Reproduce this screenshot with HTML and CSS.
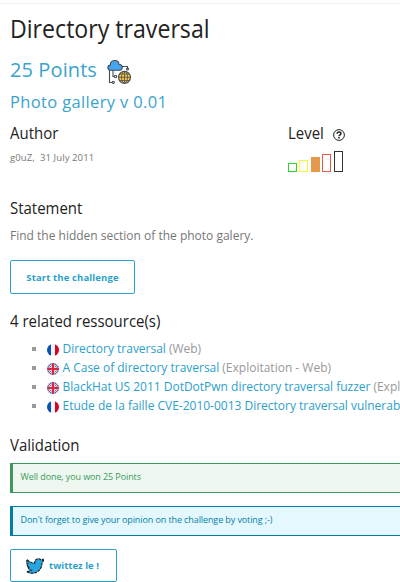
FILE: index.html
```html
<!DOCTYPE html>
<html lang="en">
<head>
<meta charset="utf-8">
<title>Directory traversal</title>
<link rel="stylesheet" href="styles.css">
</head>
<body>
<svg width="0" height="0" class="defs">
  <defs>
    <clipPath id="round"><circle cx="6" cy="6" r="6"/></clipPath>
    <g id="fr" clip-path="url(#round)"><path fill="#f4f4f4" d="M0 0h12v12H0z"/><path fill="#0752b5" d="M0 0h4v12H0z"/><path fill="#d80027" d="M8 0h4v12H8z"/></g>
    <g id="gb" clip-path="url(#round)"><path fill="#2f5cae" d="M0 0h12v12H0z"/><path stroke="#eee" stroke-width="2.2" d="M1 1l10 10M11 1L1 11"/><path stroke="#db2b48" stroke-width=".9" d="M1 1l10 10M11 1L1 11"/><path stroke="#eee" stroke-width="3.2" d="M6 0v12M0 6h12"/><path stroke="#db2545" stroke-width="2" d="M6 0v12M0 6h12"/></g>
  </defs>
</svg>
<main class="page">
  <h1><span>Directory traversal</span></h1>
  <div class="points"><span class="points-text">25 Points</span>
    <svg class="category" width="24" height="24" viewBox="0 0 24 24" fill="none" stroke="#434b57" stroke-width="1.1">
      <path d="M2.5 10v12.500h3M6 10v6.500h1M15 6.500h5.500v2"/>
      <circle cx="6.300" cy="22.300" r="1.100"/><circle cx="8.500" cy="16.500" r="1.200"/><circle cx="20.500" cy="9" r="1"/>
      <path fill="#45a5ee" d="M3.500 10.200C.2 10.200-.1 5.600 3.300 5.100C3.300-.7 11.500-1 12 4.200C16 4.300 16.200 10.200 13 10.200z"/>
      <circle cx="17.500" cy="17.300" r="6" fill="#f9c43f"/>
      <path stroke-width=".8" d="M17.500 11.300v12M11.500 17.300h12M12.700 14h9.600M12.700 20.600h9.600"/><ellipse stroke-width=".8" cx="17.500" cy="17.300" rx="3" ry="6"/>
    </svg>
  </div>
  <p class="subtitle">Photo gallery v 0.01</p>
  <div class="meta">
    <section class="author">
      <h2><span class="w-author">Author</span></h2>
      <p class="byline">g0uZ,&nbsp; 31 July 2011</p>
    </section>
    <section class="level">
      <div class="level-head"><h2><span class="w-level">Level</span></h2>
        <svg class="help" width="12" height="12" viewBox="0 0 12 12" fill="none" stroke="#222"><circle cx="6" cy="6" r="5.400"/><path stroke-width="1.500" d="M4.100 4.800C4.100 2.500 8 2.500 8 4.600C8 6 6 5.800 6 7.300M6 8.100v1.400"/></svg>
      </div>
      <div class="bars"><i class="b1"></i><i class="b2"></i><i class="b3"></i><i class="b4"></i><i class="b5"></i></div>
    </section>
  </div>
  <h2><span class="w-statement">Statement</span></h2>
  <p class="statement">Find the hidden section of the photo galery.</p>
  <a class="button start">Start the challenge</a>
  <h2 class="related"><span class="w-related">4 related ressource(s)</span></h2>
  <ul class="resources">
    <li><svg width="12" height="12"><use href="#fr"/></svg><a>Directory traversal</a><span>(Web)</span></li>
    <li><svg width="12" height="12"><use href="#gb"/></svg><a>A Case of directory traversal</a><span>(Exploitation - Web)</span></li>
    <li><svg width="12" height="12"><use href="#gb"/></svg><a>BlackHat US 2011 DotDotPwn directory traversal fuzzer</a><span>(Expl</span></li>
    <li><svg width="12" height="12"><use href="#fr"/></svg><a>Etude de la faille CVE-2010-0013 Directory traversal vulnerab</a></li>
  </ul>
  <h2 class="validation"><span class="w-validation">Validation</span></h2>
  <div class="alert success">Well done, you won 25 Points</div>
  <div class="alert info">Don't forget to give your opinion on the challenge by voting ;-)</div>
  <a class="button tweet">
    <svg width="18" height="16" viewBox="0 0 18 16"><path fill="#29a5df" stroke="#101c24" stroke-width="1.100" stroke-dasharray="3 .7" d="M1.200 1.700C3.200 4 5.500 5.100 8.700 5.200C8.500 2.600 10 .8 12.300.8C13.500.8 14.300 1.200 15 1.900L17.300 1.200L16.200 2.800L17.600 2.700L16 4.600C16.200 10.500 12 15.200 6 15.200C4 15.200 2 14.700.6 13.600C2.600 13.700 4 13.200 5.300 12.200C3.600 12 2.600 11 2.200 9.700H3.600C1.800 9 .9 7.600.9 5.800L2.300 6.200C.7 4.900.4 3.300 1.200 1.700z"/></svg>
    <span>twittez le !</span>
  </a>
</main>
</body>
</html>
```
FILE: styles.css
```css
* { box-sizing: border-box; }
body {
  margin: 0;
  height: 582px;
  overflow: hidden;
  background: #fff;
  font-family: "Open Sans", "Noto Sans", sans-serif;
  color: #777;
}
.defs { position: absolute; }
.page { margin-top: 3px; border-top: 1px solid #eee; padding: 9px 0 0 10px; }
h1, h2, p, ul { margin: 0; padding: 0; font-weight: 400; }
h1, h2 { color: #222; white-space: nowrap; }
h1 span, h2 span { display: inline-block; transform-origin: 0 50%; }
h1 { height: 30px; font-size: 25px; line-height: 30px; }
h1 span { transform: scaleX(.925); }
h2 { height: 24px; font-size: 16px; line-height: 24px; }
h2 span { transform: scaleX(.935); }
.points { display: flex; height: 44px; padding-top: 12px; color: #3ba3cd; font-size: 20px; line-height: 30px; }
.points-text { letter-spacing: .1px; }
.category { margin: 5px 0 0 10px; overflow: visible; }
.subtitle { height: 34px; color: #3ba3cd; font-size: 16.500px; line-height: 30px; letter-spacing: .35px; }
.meta { display: flex; height: 75px; }
.author { width: 278px; }
.byline { margin-top: 5px; font-size: 9.500px; line-height: 16px; letter-spacing: .1px; }
.level-head { display: flex; }
.level-head h2 { width: 45px; }
.help { margin-top: 8px; }
.bars { display: flex; align-items: flex-end; height: 27px; }
.bars i { width: 9px; margin-right: 2px; border: 1px solid; }
.b1 { height: 9px; color: #35d12f; }
.b2 { height: 12px; color: #fbf936; }
.bars .b2 { margin-right: 3px; }
.b3 { height: 15px; color: #e59a4b; background: #e59a4b; }
.b4 { height: 18px; color: #e75b45; }
.bars .b4 { margin-right: 3px; }
.b5 { height: 21px; color: #333; }
.statement { margin-top: 6px; font-size: 12px; line-height: 20px; }
.button {
  display: flex;
  align-items: center;
  justify-content: center;
  border: 1px solid #28a3cb;
  border-radius: 2px;
  color: #2b9fcb;
  font-size: 9.500px;
  font-weight: 700;
  white-space: nowrap;
}
.start { width: 125px; height: 34px; margin-top: 14px; letter-spacing: .13px; }
.related { margin-top: 15px; }
.resources { padding: 6px 0 0 22px; list-style: none; }
.resources li { display: flex; align-items: center; height: 19px; overflow: hidden; font-size: 12px; white-space: nowrap; }
.resources li::before { content: ""; flex: none; width: 4px; height: 4px; margin-right: 11px; background: #999; }
.resources li svg { flex: none; margin: 3px 3.500px 0 0; }
.resources a { color: #2b9fcb; letter-spacing: -.01px; }
.resources li span { margin-left: 3px; color: #999; }
.validation { margin-top: 18px; }
.alert { height: 30px; border: 1px solid; border-width: 1px 0 1px 3px; padding-left: 7.500px; font-size: 9px; line-height: 26px; letter-spacing: -.1px; }
.validation + .alert { margin-top: 6px; }
.success { border-color: #3c9a5f; background: #edf7ef; color: #3c9a5f; }
.info { margin-top: 13px; border-color: #007fa3; background: #e5f8ff; color: #007fa3; }
.tweet { width: 107px; height: 33px; margin-top: 13px; padding-right: 2px; }
.tweet span { margin-left: 5px; }
```
